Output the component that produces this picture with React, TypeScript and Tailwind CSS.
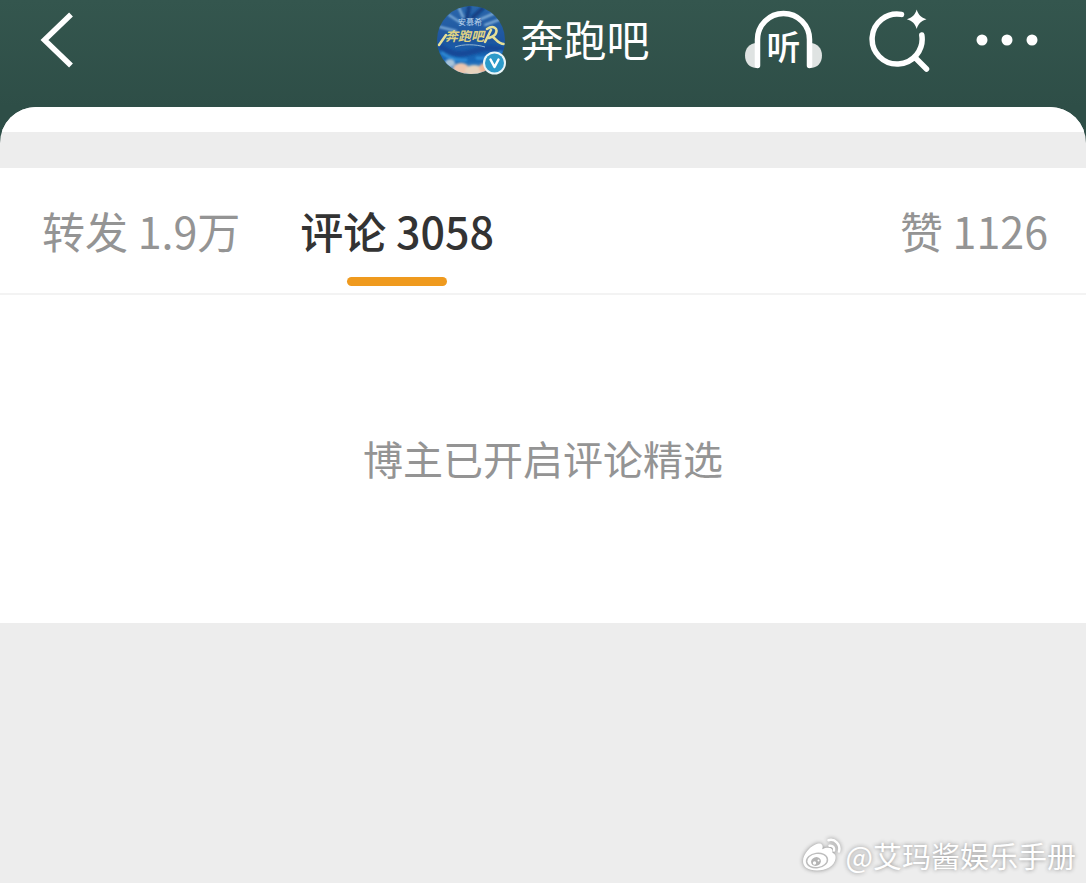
import { useState } from "react"

type TabKey = "reposts" | "comments" | "likes"

interface TabItem {
  key: TabKey
  label: string
  count: string
  className?: string
}

const tabs: TabItem[] = [
  { key: "reposts", label: "转发", count: "1.9万" },
  { key: "comments", label: "评论", count: "3058" },
  { key: "likes", label: "赞", count: "1126", className: "ml-auto" },
]

function BackIcon() {
  return (
    <svg width="34" height="56" viewBox="0 0 34 56" fill="none" aria-hidden="true">
      <path d="M31 2.5 4.5 28 31 53.5" stroke="#fff" strokeWidth="5.500" />
    </svg>
  )
}

function ListenIcon() {
  return (
    <svg width="78" height="60" viewBox="0 0 78 60" fill="none" aria-hidden="true">
      <path d="M15 33C6 32 1 38 1 45.500S6 59 15 58Z" fill="#dfe3e2" />
      <path d="M64 33c9-1 14 5 14 12.500S73 59 64 58Z" fill="#dfe3e2" />
      <path d="M13.500 55.500V29.500a26 26 0 0 1 52 0v26" stroke="#fff" strokeWidth="5.500" strokeLinecap="round" />
      <text x="39.500" y="50" textAnchor="middle" fontSize="34" fontWeight="500" fill="#fff">
        听
      </text>
    </svg>
  )
}

function SearchIcon() {
  return (
    <svg width="64" height="64" viewBox="0 0 64 64" fill="none" aria-hidden="true">
      <path
        d="M34.500 6.400A25 25 0 1 0 54.800 27M47.500 49 59.500 61"
        stroke="#fff"
        strokeWidth="5.500"
        strokeLinecap="round"
      />
      <path
        d="M49.700 1.500c1.700 5.500 4.200 8 9.800 9.800-5.600 1.800-8.100 4.300-9.800 9.800-1.700-5.500-4.200-8-9.800-9.800 5.600-1.800 8.100-4.300 9.800-9.800Z"
        fill="#fff"
      />
    </svg>
  )
}

function MoreIcon() {
  return (
    <svg width="62" height="12" viewBox="0 0 62 12" fill="#fff" aria-hidden="true">
      <circle cx="6" cy="6" r="5.500" />
      <circle cx="31" cy="6" r="5.500" />
      <circle cx="56" cy="6" r="5.500" />
    </svg>
  )
}

function WeiboIcon() {
  return (
    <svg
      width="40"
      height="36"
      viewBox="0 0 40 36"
      fill="none"
      className="overflow-visible drop-shadow-[0_0_2px_#888888]"
      aria-hidden="true"
    >
      <path
        d="M1 24C1 17 9 8 16 6.500c4-.7 5.500 2 4.300 5.700 5-2.200 11-2.200 10.200 3.500 2.500 1 3.500 3 3 6C32.500 29 24 33.500 15 33.500S1 30 1 24Z"
        fill="#fff"
      />
      <ellipse cx="15" cy="23.500" rx="10.500" ry="7.200" transform="rotate(-8 15 23.500)" fill="#fff" stroke="#bdbdbd" strokeWidth="1.500" />
      <ellipse cx="14" cy="24.500" rx="5" ry="4.300" transform="rotate(-20 14 24.500)" fill="#b5b5b5" />
      <circle cx="12.500" cy="26" r="1.700" fill="#fff" />
      <circle cx="16.500" cy="23.500" r="1" fill="#fff" />
      <path d="M26.500 3.200C33 1.500 39 7.500 37 14.500M27.500 8.800c3.200-.6 5.300 1.700 4.500 4.700" stroke="#fff" strokeWidth="2.500" strokeLinecap="round" />
    </svg>
  )
}

function Avatar() {
  return (
    <svg width="70" height="70" viewBox="0 0 70 70" className="shrink-0" aria-hidden="true">
      <defs>
        <clipPath id="avatar-clip">
          <circle cx="34" cy="35" r="34" />
        </clipPath>
        <linearGradient id="avatar-sky" x1="0" y1="0" x2="0" y2="1">
          <stop offset="0" stopColor="#2b67ac" />
          <stop offset="0.500" stopColor="#1d559f" />
          <stop offset="0.800" stopColor="#1767b8" />
          <stop offset="1" stopColor="#6fa3cb" />
        </linearGradient>
        <filter id="avatar-soft">
          <feGaussianBlur stdDeviation="1.200" />
        </filter>
      </defs>
      <g clipPath="url(#avatar-clip)">
        <rect width="70" height="70" fill="url(#avatar-sky)" />
        <g filter="url(#avatar-soft)" fill="none" strokeLinecap="round">
          <path d="M12 10 24 18M22 3l4 9M3 22l16 4M44 14l14-6M48 20l16-6" stroke="#8db9df" strokeWidth="2" />
          <path d="M32 2 30 14M36 12 46 3" stroke="#123f83" strokeWidth="4" />
          <path d="M4 42c12 8 20 8 30 5s20-6 32-2" stroke="#124a98" strokeWidth="6" />
          <path d="M5 48c8 6 16 8 24 7M40 53c8 1 16-2 24-6" stroke="#2f8ad4" strokeWidth="3" />
        </g>
        <g filter="url(#avatar-soft)">
          <ellipse cx="24" cy="64" rx="8" ry="6" fill="#edc5ad" />
          <ellipse cx="37" cy="66" rx="9" ry="6" fill="#e7d3bd" />
          <ellipse cx="49" cy="63" rx="7" ry="5" fill="#f0b698" />
          <ellipse cx="13" cy="58" rx="5" ry="4" fill="#a7c4da" />
        </g>
        <text x="33" y="20" textAnchor="middle" fontSize="8" fill="#bcd4ec">
          安慕希
        </text>
        <text x="8" y="36" fontSize="13" fontWeight="700" fontStyle="italic" fill="#dfd283">
          奔跑吧
        </text>
        <path
          d="M9 30 2 40M50 24c6-4 11-1 9 4-1 3-4 4-7 5m2-8-6 12m8-5c4 3 5 7 11 7"
          stroke="#e5df98"
          strokeWidth="2.500"
          strokeLinecap="round"
          fill="none"
        />
        <path d="M18 42c8-3 20-3 30 0" stroke="#8fb5d3" strokeWidth="1" fill="none" />
      </g>
      <circle cx="57.500" cy="58" r="11.500" fill="#e9f5f8" />
      <circle cx="57.500" cy="58" r="9.500" fill="#2c9ac9" />
      <path d="m53.500 54.500 4 7.500 4-7.500" stroke="#fff" strokeWidth="2.500" strokeLinecap="round" strokeLinejoin="round" fill="none" />
    </svg>
  )
}

function Header() {
  return (
    <header className="grid h-20 grid-cols-[1fr_auto_1fr] items-center px-10">
      <button type="button" aria-label="返回" className="justify-self-start">
        <BackIcon />
      </button>
      <a href="#profile" className="flex items-center gap-3.5 text-white">
        <Avatar />
        <span className="pb-1 text-[43px] leading-[60px]">奔跑吧</span>
      </a>
      <div className="flex items-center gap-[45px] justify-self-end pr-2">
        <button type="button" aria-label="听">
          <ListenIcon />
        </button>
        <button type="button" aria-label="搜索">
          <SearchIcon />
        </button>
        <button type="button" aria-label="更多">
          <MoreIcon />
        </button>
      </div>
    </header>
  )
}

export default function App() {
  const [active, setActive] = useState<TabKey>("comments")

  return (
    <div className="flex min-h-screen flex-col bg-[#2e4e47] font-['Noto_Sans_CJK_SC',sans-serif]">
      <div className="bg-linear-to-b from-[#34564e] to-[#2e4e47] pb-[27px]">
        <Header />
      </div>

      <main className="flex flex-1 flex-col overflow-hidden rounded-t-[36px] bg-[#ededed]">
        <div className="mb-9 h-[25px] bg-white" />

        <div role="tablist" className="flex border-b-2 border-[#f3f3f3] bg-white pl-[42px] pr-[38px]">
          {tabs.map((tab) => {
            const selected = tab.key === active
            return (
              <button
                key={tab.key}
                type="button"
                role="tab"
                id={`tab-${tab.key}`}
                aria-selected={selected}
                aria-controls="tab-panel"
                onClick={() => setActive(tab.key)}
                className={`flex flex-col items-center pt-8 pb-[7px] text-[43px] leading-[60px] ${
                  selected ? "font-medium text-[#333333]" : "text-[#949494]"
                } ${tab.className ?? "mr-[60px]"}`}
              >
                <span>
                  {tab.label} {tab.count}
                </span>
                <span className={`mt-[17px] h-[9px] w-[100px] rounded-full ${selected ? "bg-[#ef9a1e]" : ""}`} />
              </button>
            )
          })}
        </div>

        <section
          id="tab-panel"
          role="tabpanel"
          aria-labelledby={`tab-${active}`}
          className="flex items-center justify-center bg-white pt-[133px] pb-[135px]"
        >
          <p className="text-[40px] leading-[60px] text-[#949494]">博主已开启评论精选</p>
        </section>

        <footer className="mt-auto flex items-center justify-end gap-1 pb-2 pr-2.5 text-white">
          <WeiboIcon />
          <span className="text-[29px] leading-10 [text-shadow:0_0_4px_#888888]">@艾玛酱娱乐手册</span>
        </footer>
      </main>
    </div>
  )
}
